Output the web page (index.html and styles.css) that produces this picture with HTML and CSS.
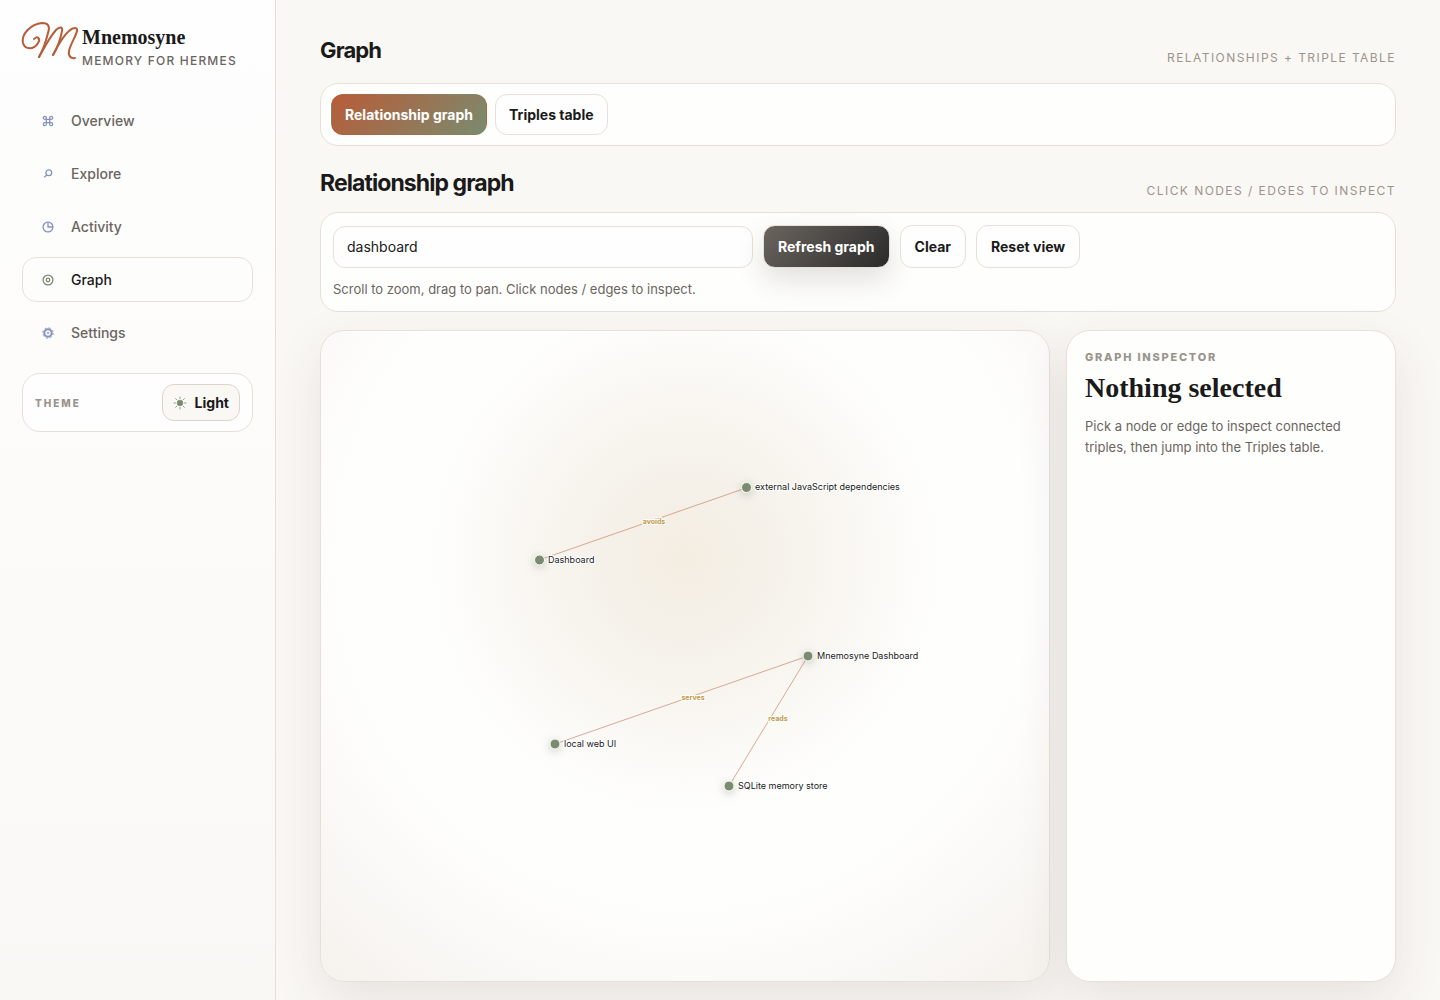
FILE: index.html
```html
<!DOCTYPE html>
<html lang="en">
<head>
    <meta charset="UTF-8">
    <meta name="viewport" content="width=device-width, initial-scale=1.0">
    <title>Mnemosyne - Graph</title>
    <link rel="stylesheet" href="styles.css">
</head>
<body>
    <div class="app">
        <aside class="sidebar">
            <div class="brand">
                <svg class="brand-mark" viewBox="0 0 60 44" aria-hidden="true">
                    <path d="M12 17 C15 13 19 17 16 21 C12 28 3 28 1 21 C-1 12 9 2 20 1 C27 1 28 5 26 11 C24 19 21 28 17 35" />
                    <path d="M17 35 C21 28 27 16 34 8 C38 4 41 5 40 9 C39 16 35 27 31 33" />
                    <path d="M31 33 C35 25 41 14 47 9 C51 5 56 5 55 9 C54 14 48 23 47 29 C46 34 49 37 53 36" />
                </svg>
                <div class="brand-text">
                    <div class="brand-name">Mnemosyne</div>
                    <div class="brand-sub">Memory for Hermes</div>
                </div>
            </div>

            <nav class="nav">
                <a class="nav-item" href="#overview">
                    <svg class="icon" viewBox="0 0 12 12" aria-hidden="true"><path d="M4.3 4.3H7.7V7.7H4.3ZM4.3 4.3H2.8A1.5 1.5 0 1 1 4.3 2.8ZM7.7 4.3V2.8A1.5 1.5 0 1 1 9.2 4.3ZM7.7 7.7H9.2A1.5 1.5 0 1 1 7.7 9.2ZM4.3 7.7V9.2A1.5 1.5 0 1 1 2.8 7.7Z" /></svg>
                    Overview
                </a>
                <a class="nav-item" href="#explore">
                    <svg class="icon" viewBox="0 0 12 12" aria-hidden="true"><circle cx="6.8" cy="4.8" r="2.9" /><path d="M4.8 6.9L2.2 9.2" /></svg>
                    Explore
                </a>
                <a class="nav-item" href="#activity">
                    <svg class="icon" viewBox="0 0 12 12" aria-hidden="true"><circle cx="6" cy="6" r="4.9" /><path d="M6 1.2V6H10.8" /></svg>
                    Activity
                </a>
                <a class="nav-item active" href="#graph">
                    <svg class="icon" viewBox="0 0 12 12" aria-hidden="true"><circle cx="6" cy="6" r="4.9" /><circle cx="6" cy="6" r="1.8" /></svg>
                    Graph
                </a>
                <a class="nav-item" href="#settings">
                    <svg class="icon" viewBox="0 0 12 12" aria-hidden="true"><circle class="teeth" cx="6" cy="6" r="5.2" /><circle class="wheel" cx="6" cy="6" r="3.7" /><circle class="hub" cx="6" cy="6" r="1" /></svg>
                    Settings
                </a>
            </nav>

            <div class="theme">
                <span class="eyebrow small">Theme</span>
                <button class="theme-btn" type="button">
                    <svg class="sun" viewBox="0 0 14 14" aria-hidden="true"><circle cx="7" cy="7" r="2.8" /><path d="M7 0.5V3M7 11V13.5M0.5 7H3M11 7H13.5M2.3 2.3L4.2 4.2M9.8 9.8L11.7 11.7M2.3 11.7L4.2 9.8M9.8 4.2L11.7 2.3" /></svg>
                    Light
                </button>
            </div>
        </aside>

        <main class="main">
            <div class="section-head">
                <h2>Graph</h2>
                <span class="hint">Relationships + triple table</span>
            </div>
            <div class="panel tabs">
                <button class="tab active" type="button">Relationship graph</button>
                <button class="tab" type="button">Triples table</button>
            </div>

            <div class="section-head second">
                <h3>Relationship graph</h3>
                <span class="hint">Click nodes / edges to inspect</span>
            </div>
            <div class="panel tools">
                <div class="toolbar">
                    <input class="search" type="text" value="dashboard" aria-label="Filter graph">
                    <button class="btn primary" type="button">Refresh graph</button>
                    <button class="btn" type="button">Clear</button>
                    <button class="btn" type="button">Reset view</button>
                </div>
                <p class="note">Scroll to zoom, drag to pan. Click nodes / edges to inspect.</p>
            </div>

            <div class="graph-layout">
                <section class="card canvas">
                    <svg class="graph" viewBox="0 0 728 650" role="img" aria-label="Relationship graph">
                        <g class="edges">
                            <path d="M218 229L425 157" />
                            <path d="M234 413L487 325" />
                            <path d="M408 455L487 325" />
                        </g>
                        <g class="edge-labels">
                            <text x="333" y="193">avoids</text>
                            <text x="372" y="369">serves</text>
                            <text x="457" y="390">reads</text>
                        </g>
                        <g class="nodes">
                            <circle cx="218.5" cy="229" r="5" />
                            <circle cx="425.5" cy="156.5" r="5" />
                            <circle cx="487" cy="325" r="5" />
                            <circle cx="234" cy="413" r="5" />
                            <circle cx="408" cy="455" r="5" />
                        </g>
                        <g class="node-labels">
                            <text x="227" y="232">Dashboard</text>
                            <text x="434" y="159">external JavaScript dependencies</text>
                            <text x="496" y="328">Mnemosyne Dashboard</text>
                            <text x="243" y="416">local web UI</text>
                            <text x="417" y="458">SQLite memory store</text>
                        </g>
                    </svg>
                </section>
                <section class="card inspector">
                    <div class="eyebrow">Graph inspector</div>
                    <h4>Nothing selected</h4>
                    <p>Pick a node or edge to inspect connected triples, then jump into the Triples table.</p>
                </section>
            </div>
        </main>
    </div>
</body>
</html>
```
FILE: styles.css
```css
:root {
    --ink: #1a1a1a;
    --muted: #6b655f;
    --faint: #9a948c;
    --line: #e8e0d8;
    --rust: #b85c38;
    --sage: #7a8b6f;
    --blue: #8793bf;
    --gold: #c19a4b;
}
* {
    box-sizing: border-box;
}
body {
    margin: 0;
    font-family: Inter, "Liberation Sans", sans-serif;
    font-size: 14px;
    color: var(--ink);
    background: #faf8f5;
}
h2, h3, h4, p {
    margin: 0;
}
button, input {
    font: inherit;
    color: inherit;
}
button {
    cursor: pointer;
}
.app {
    display: grid;
    grid-template-columns: 276px 1fr;
    min-height: 100vh;
}

/* sidebar */
.sidebar {
    padding: 22px;
    border-right: 1px solid var(--line);
    background: linear-gradient(180deg, #fefefe, #faf8f5);
}
.brand {
    display: flex;
    align-items: flex-start;
    height: 52px;
    margin-bottom: 24px;
}
.brand-mark {
    width: 60px;
    height: 44px;
    overflow: visible;
    fill: none;
    stroke: var(--rust);
    stroke-width: 2;
    stroke-linecap: round;
}
.brand-name {
    font-family: "Liberation Serif", serif;
    font-size: 20px;
    font-weight: 700;
    line-height: 31px;
}
.brand-sub {
    font-size: 12px;
    font-weight: 500;
    line-height: 16px;
    letter-spacing: 0.1em;
    text-transform: uppercase;
    color: var(--muted);
}
.nav {
    display: grid;
    gap: 8px;
}
.nav-item {
    display: flex;
    align-items: center;
    gap: 17px;
    height: 45px;
    padding: 0 19px;
    border: 1px solid transparent;
    border-radius: 14px;
    font-weight: 500;
    color: var(--muted);
    text-decoration: none;
}
.nav-item.active {
    color: var(--ink);
    border-color: var(--line);
    background: #fdfdfb;
}
.icon {
    width: 12px;
    height: 12px;
    fill: none;
    stroke: var(--blue);
    stroke-width: 1.3;
}
.active .icon {
    stroke: var(--sage);
}
.icon .teeth {
    stroke-width: 1;
    stroke-dasharray: 2 2.08;
}
.icon .wheel {
    stroke-width: 2;
}
.icon .hub {
    stroke-width: 0.8;
}
.theme {
    display: flex;
    align-items: center;
    justify-content: space-between;
    margin-top: 18px;
    padding: 10px 12px;
    border: 1px solid var(--line);
    border-radius: 18px;
    background: #fefefe;
}
.eyebrow {
    font-size: 11px;
    font-weight: 800;
    line-height: 16px;
    letter-spacing: 0.16em;
    text-transform: uppercase;
    color: var(--faint);
}
.eyebrow.small {
    font-size: 10px;
    letter-spacing: 0.2em;
}
.theme-btn {
    display: flex;
    align-items: center;
    gap: 8px;
    height: 37px;
    padding: 0 10px;
    border: 1px solid #ddd3ca;
    border-radius: 12px;
    background: #faf8f5;
    font-weight: 700;
}
.sun {
    width: 14px;
    height: 14px;
    fill: var(--sage);
    stroke: var(--sage);
    stroke-width: 0.8;
}

/* main column */
.main {
    display: flex;
    flex-direction: column;
    padding: 36px 44px 18px;
}
.section-head {
    display: flex;
    align-items: flex-end;
    justify-content: space-between;
    height: 30px;
    margin-bottom: 17px;
}
.section-head.second {
    margin: 23px 0 13px;
}
h2, h3 {
    align-self: flex-start;
    font-size: 22px;
    font-weight: 700;
    line-height: 28px;
    letter-spacing: -0.04em;
}
h3 {
    font-size: 23px;
}
.hint {
    font-size: 12px;
    line-height: 16px;
    letter-spacing: 0.12em;
    text-transform: uppercase;
    color: var(--faint);
}
.panel {
    border: 1px solid var(--line);
    border-radius: 18px;
    background: #fefefc;
}
.tabs {
    display: flex;
    gap: 8px;
    padding: 10px;
}
.tab, .btn {
    border: 1px solid var(--line);
    border-radius: 12px;
    background: #fefefe;
    font-weight: 700;
}
.tab {
    height: 41px;
    padding: 0 13px;
}
.tab.active {
    border-color: transparent;
    background: linear-gradient(135deg, var(--rust), var(--sage));
    color: #fff;
}
.tools {
    padding: 12px;
}
.toolbar {
    display: flex;
    align-items: center;
    gap: 10px;
}
.search {
    width: 420px;
    height: 42px;
    padding: 0 13px;
    border: 1px solid var(--line);
    border-radius: 12px;
    background: #fefefe;
}
.btn {
    height: 43px;
    padding: 0 14px;
}
.btn.primary {
    background: linear-gradient(135deg, #6b655f, #2a2a2a);
    color: #fff;
    box-shadow: 0 12px 28px rgba(60, 45, 35, 0.14);
}
.note {
    margin-top: 11px;
    font-size: 13px;
    line-height: 20px;
    color: var(--muted);
}

/* graph and inspector */
.graph-layout {
    display: grid;
    grid-template-columns: 1fr 330px;
    gap: 16px;
    flex: 1;
    margin-top: 18px;
}
.card {
    border: 1px solid var(--line);
    border-radius: 24px;
    background: #fefefc;
    box-shadow: 0 18px 50px rgba(60, 50, 40, 0.1);
}
.canvas {
    background: radial-gradient(circle at 50% 35%, #f4ede2, #f5f1e9 14%, #faf8f4 32%, #fefefd 46%, #fefefd 62%, #f9f7f4 84%, #f5f2ed);
}
.graph {
    display: block;
    width: 100%;
    height: 100%;
}
.edges path {
    fill: none;
    stroke: var(--rust);
    stroke-width: 1;
    opacity: 0.5;
}
.graph text {
    paint-order: stroke;
    stroke: #fefefe;
    stroke-width: 2;
    stroke-linejoin: round;
}
.edge-labels text {
    font-size: 7px;
    font-weight: 700;
    fill: var(--gold);
    text-anchor: middle;
}
.node-labels text {
    font-size: 9px;
    font-weight: 400;
    fill: var(--ink);
}
.nodes circle {
    fill: var(--sage);
    stroke: #fefefe;
    stroke-width: 1;
    filter: drop-shadow(0 2px 4px rgba(80, 90, 70, 0.3));
}
.inspector {
    padding: 18px;
}
.inspector h4 {
    margin: 3px 0 8px;
    font-family: "Liberation Serif", serif;
    font-size: 28px;
    font-weight: 700;
    line-height: 40px;
}
.inspector p {
    font-size: 13px;
    line-height: 21px;
    color: var(--muted);
}
```
